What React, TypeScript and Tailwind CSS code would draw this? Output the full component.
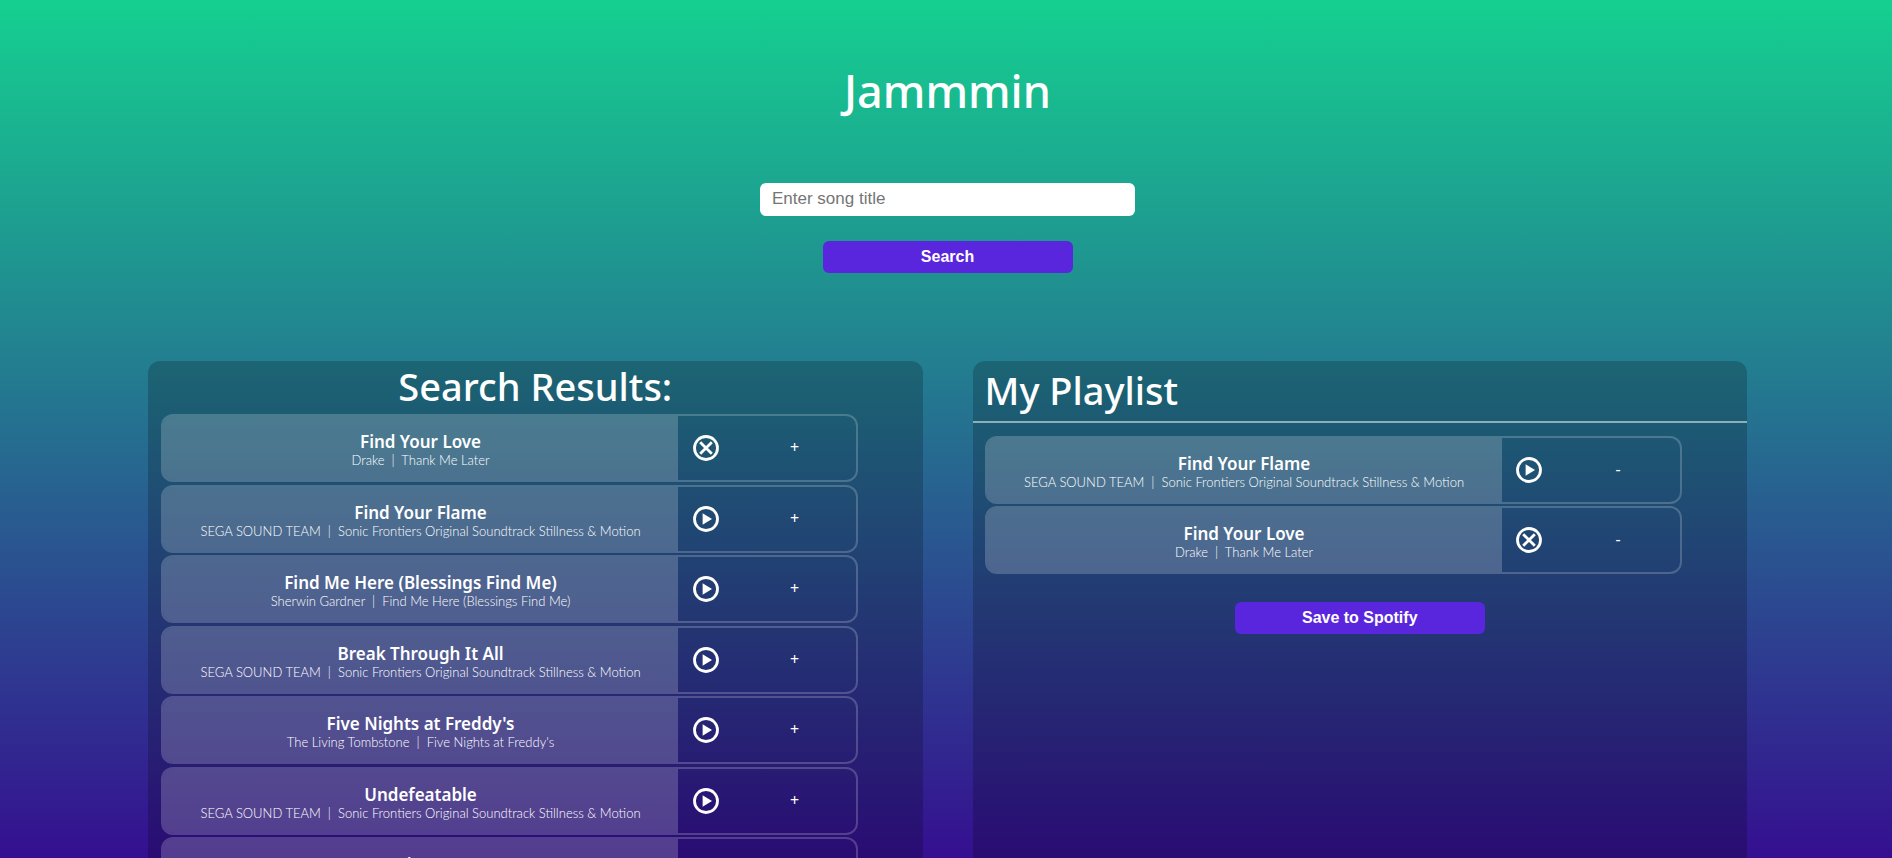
import React from 'react';

type Track = { title: string; artist: string; album: string; playing?: boolean };

const sonic = 'Sonic Frontiers Original Soundtrack Stillness & Motion';

const results: Track[] = [
  { title: 'Find Your Love', artist: 'Drake', album: 'Thank Me Later', playing: true },
  { title: 'Find Your Flame', artist: 'SEGA SOUND TEAM', album: sonic },
  { title: 'Find Me Here (Blessings Find Me)', artist: 'Sherwin Gardner', album: 'Find Me Here (Blessings Find Me)' },
  { title: 'Break Through It All', artist: 'SEGA SOUND TEAM', album: sonic },
  { title: "Five Nights at Freddy's", artist: 'The Living Tombstone', album: "Five Nights at Freddy's" },
  { title: 'Undefeatable', artist: 'SEGA SOUND TEAM', album: sonic },
  { title: 'Winner', artist: 'SEGA SOUND TEAM', album: sonic },
];

const playlist: Track[] = [results[1], results[0]];

function PreviewIcon({ playing }: { playing?: boolean }) {
  return (
    <svg viewBox="0 0 26 26" className="size-[26px]" fill="none" stroke="currentColor" aria-hidden="true">
      <circle cx="13" cy="13" r="11.5" strokeWidth="2.8" />
      {playing ? (
        <path d="M7.2 7.2 18.8 18.8M18.8 7.2 7.2 18.8" strokeWidth="2.8" />
      ) : (
        <path d="M9.6 7.2v11.6l9.4-5.8z" fill="currentColor" stroke="none" />
      )}
    </svg>
  );
}

function TrackCard({ track, action }: { track: Track; action: '+' | '-' }) {
  return (
    <div className="flex h-[68px] rounded-xl border-2 border-white/20 bg-clip-padding">
      <div className="flex flex-1 flex-col items-center justify-center rounded-l-[10px] bg-white/20 pt-1 text-center">
        <h3 className="text-[17px] leading-5 font-semibold">{track.title}</h3>
        <p className="font-[Lato,sans-serif] text-[13px] leading-4 font-light whitespace-pre">
          {track.artist}  |  {track.album}
        </p>
      </div>
      <div className="flex w-[178px] items-center">
        <button
          type="button"
          aria-label={track.playing ? 'Stop preview' : 'Play preview'}
          className="flex w-[55px] justify-center"
        >
          <PreviewIcon playing={track.playing} />
        </button>
        <button
          type="button"
          aria-label={action === '+' ? 'Add to playlist' : 'Remove from playlist'}
          className="flex-1 pb-0.5 text-base leading-6"
        >
          {action}
        </button>
      </div>
    </div>
  );
}

const primaryButton =
  "block h-8 w-[250px] rounded-md bg-[#5926dd] font-['Liberation_Sans',sans-serif] text-base font-bold";

export default function App() {
  return (
    <div className="h-screen overflow-y-auto bg-linear-to-b/srgb from-[#15d090] to-[#350f90] pl-[3px] font-['Noto_Sans',sans-serif] text-white [scrollbar-width:none]">
      <h1 className="pt-[57px] text-center text-[45px] leading-[68px] font-medium">Jammmin</h1>
      <form className="mt-[58px] flex flex-col items-center gap-[25px]" onSubmit={(e) => e.preventDefault()}>
        <input
          type="text"
          aria-label="Song title"
          placeholder="Enter song title"
          className="h-[33px] w-[375px] rounded-md bg-white px-3 pb-0.5 font-['Liberation_Sans',sans-serif] text-[17px] text-black placeholder:text-[#757575]"
        />
        <button type="submit" className={primaryButton}>
          Search
        </button>
      </form>
      <main className="mx-auto mt-[88px] grid min-h-[600px] w-full max-w-[1599px] grid-cols-2 gap-[50px]">
        <section className="rounded-xl bg-black/20">
          <h2 className="pb-0.5 text-center text-[38px] leading-[51px] font-medium">Search Results:</h2>
          <ul className="ml-[13px] w-9/10">
            {results.map((track) => (
              <li key={track.title} className="odd:mb-[3px] even:mb-0.5">
                <TrackCard track={track} action="+" />
              </li>
            ))}
          </ul>
        </section>
        <section className="rounded-xl bg-black/20">
          <h2 className="border-b-2 border-white/50 px-3 pb-0.5 text-[38px] leading-[58px] font-medium">My Playlist</h2>
          <ul className="mt-[13px] ml-3 flex w-9/10 flex-col gap-0.5">
            {playlist.map((track) => (
              <li key={track.title}>
                <TrackCard track={track} action="-" />
              </li>
            ))}
          </ul>
          <button type="button" className={`${primaryButton} mx-auto mt-7`}>
            Save to Spotify
          </button>
        </section>
      </main>
    </div>
  );
}
